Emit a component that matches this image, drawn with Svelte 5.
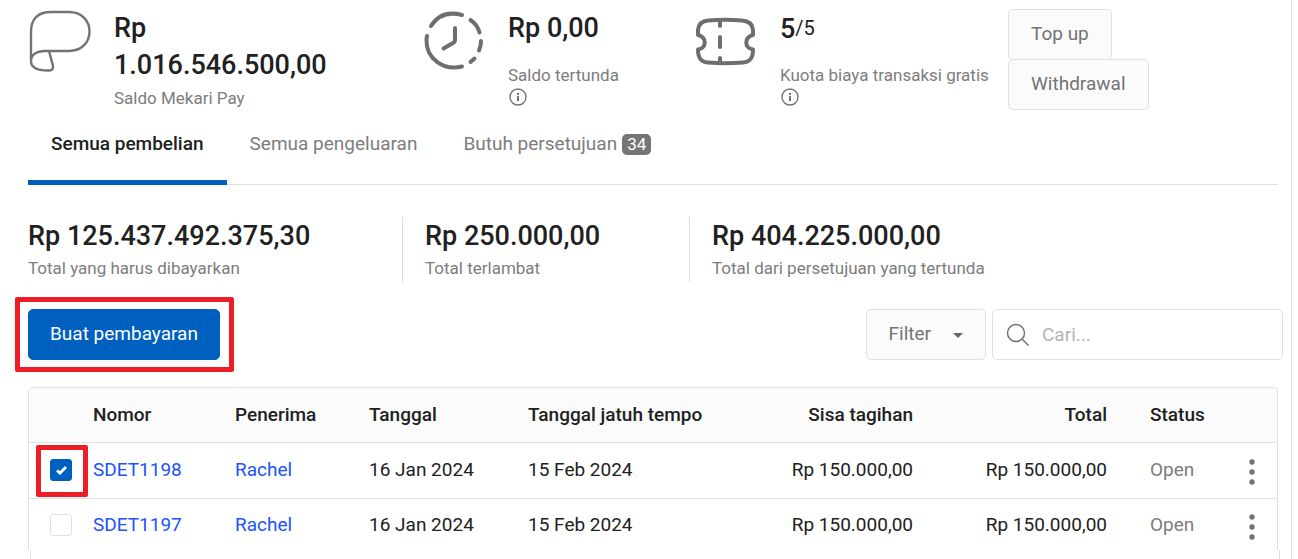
<script>
  const tabs = [
    { label: 'Semua pembelian', active: true },
    { label: 'Semua pengeluaran' },
    { label: 'Butuh persetujuan', badge: 34 }
  ];
  const totals = [
    { value: 'Rp 125.437.492.375,30', label: 'Total yang harus dibayarkan' },
    { value: 'Rp 250.000,00', label: 'Total terlambat' },
    { value: 'Rp 404.225.000,00', label: 'Total dari persetujuan yang tertunda' }
  ];
  let rows = $state([
    { id: 'SDET1198', payee: 'Rachel', date: '16 Jan 2024', due: '15 Feb 2024', left: 'Rp 150.000,00', total: 'Rp 150.000,00', status: 'Open', checked: true },
    { id: 'SDET1197', payee: 'Rachel', date: '16 Jan 2024', due: '15 Feb 2024', left: 'Rp 150.000,00', total: 'Rp 150.000,00', status: 'Open', checked: false }
  ]);
</script>

{#snippet info()}
  <svg class="info" viewBox="0 0 18 18" width="18" height="18" aria-hidden="true">
    <circle cx="9" cy="9" r="8" fill="none" stroke="#6b7280" stroke-width="1.4" />
    <path d="M9 8v5" stroke="#6b7280" stroke-width="2" />
    <path d="M9 5v2" stroke="#6b7280" stroke-width="2" />
  </svg>
{/snippet}

<main class="page">
  <section class="balances">
    <div class="balance">
      <svg class="pic" viewBox="0 0 64 64" width="64" height="64" fill="none" stroke="#737373" stroke-width="2.4" aria-hidden="true">
        <path d="M3 50V22Q3 2 23 2H41C54 2 61.500 11 61.500 21.500S54 41 41 41H17C8 41 3 45 3 51C3 58 9 60.500 20 60.500Q25.500 61 25 56L21 41" stroke-linejoin="round" />
      </svg>
      <div>
        <div class="value">Rp 1.016.546.500,00</div>
        <div class="label">Saldo Mekari Pay</div>
      </div>
    </div>
    <div class="balance">
      <svg class="pic" viewBox="0 0 64 64" width="64" height="64" fill="none" stroke="#6e6e6e" stroke-width="4" stroke-linecap="round" aria-hidden="true">
        <path d="M7 16C14 5 25 1.500 38 5" />
        <path d="M46.500 10C51 13 54 17 55.500 22.500" />
        <path d="M57 31Q57 36 55 40.500" />
        <path d="M50.500 48.500L46.500 52" />
        <path d="M38 56.500C20 61 2 49 2.500 30Q2.500 28 3 26" />
        <path d="M31 18V30Q31 32 29 33L19.500 38.500" />
      </svg>
      <div>
        <div class="value tall">Rp 0,00</div>
        <div class="label">Saldo tertunda</div>
        {@render info()}
      </div>
    </div>
    <div class="balance">
      <svg class="pic" viewBox="0 0 64 64" width="64" height="64" fill="none" stroke="#6e6e6e" stroke-width="4" aria-hidden="true">
        <path d="M2 25V20Q3 11 12 10.500Q29 9 46 10.500Q56 11 57 20V25C48 27 48 38 57 39.500C57 47 55 52 47 52.500Q29 54 12 52.500C4 52 2 47 2 39.500C11 38 11 27 2 25Z" stroke-linejoin="round" />
        <path d="M24 10V16M24 27V37M24 48V53" stroke-linecap="round" />
      </svg>
      <div>
        <div class="value tall">5<small>/5</small></div>
        <div class="label">Kuota biaya transaksi gratis</div>
        {@render info()}
      </div>
    </div>
    <div class="actions">
      <button class="btn">Top up</button>
      <button class="btn">Withdrawal</button>
    </div>
  </section>

  <nav class="tabs">
    {#each tabs as tab}
      <button class="tab" class:active={tab.active}>
        {tab.label}{#if tab.badge}<span class="badge">{tab.badge}</span>{/if}
      </button>
    {/each}
  </nav>

  <section class="totals">
    {#each totals as item}
      <div class="total">
        <div class="value">{item.value}</div>
        <div class="label">{item.label}</div>
      </div>
    {/each}
  </section>

  <section class="toolbar">
    <button class="btn primary marked">Buat pembayaran</button>
    <button class="btn filter">Filter
      <svg viewBox="0 0 10 5" width="10" height="5" aria-hidden="true"><path d="M0 0H10L5 5Z" fill="#666" /></svg>
    </button>
    <label class="search">
      <svg viewBox="0 0 24 24" width="24" height="24" fill="none" stroke="#6e6e6e" stroke-width="1.4" aria-hidden="true">
        <circle cx="10" cy="10" r="8.500" /><path d="M16 16L22.500 22.500" />
      </svg>
      <input type="text" placeholder="Cari..." aria-label="Cari" />
    </label>
  </section>

  <table>
    <colgroup>
      <col class="c-check" /><col class="c-id" /><col class="c-payee" /><col class="c-date" /><col class="c-due" />
      <col class="c-left" /><col class="c-total" /><col class="c-status" /><col class="c-menu" />
    </colgroup>
    <thead>
      <tr>
        <th></th><th>Nomor</th><th>Penerima</th><th>Tanggal</th><th>Tanggal jatuh tempo</th>
        <th class="num">Sisa tagihan</th><th class="num">Total</th><th class="status">Status</th><th></th>
      </tr>
    </thead>
    <tbody>
      {#each rows as row, i}
        <tr>
          <td class="pick">
            <span class="box" class:marked={i === 0}>
              <input type="checkbox" bind:checked={row.checked} aria-label={row.id} />
            </span>
          </td>
          <td><a href="#{row.id}">{row.id}</a></td>
          <td><a href="#{row.payee}">{row.payee}</a></td>
          <td>{row.date}</td>
          <td>{row.due}</td>
          <td class="num">{row.left}</td>
          <td class="num">{row.total}</td>
          <td class="status">{row.status}</td>
          <td class="menu">
            <button class="more" aria-label="Menu {row.id}">
              <svg viewBox="0 0 6 26" width="6" height="26" fill="#737373" aria-hidden="true">
                <circle cx="3" cy="3" r="2.700" /><circle cx="3" cy="13" r="2.700" /><circle cx="3" cy="23" r="2.700" />
              </svg>
            </button>
          </td>
        </tr>
      {/each}
    </tbody>
  </table>
  <div class="rest"></div>
</main>

<style>
  :global(body) { margin: 0; background: #fff; }
  * { box-sizing: border-box; }
  .page {
    display: flex;
    flex-direction: column;
    min-height: 100vh;
    margin-right: 6px;
    padding: 9px 13px 0 28px;
    border-right: 1px solid #e0e0e0;
    font: 19px/24px Roboto, sans-serif;
    color: #212121;
  }
  button, input { font: inherit; }
  .value { padding-top: 1px; font-size: 27px; line-height: 37px; font-weight: 500; }
  .value.tall { min-height: 54px; }
  .value small { font-size: 20px; font-weight: 400; vertical-align: 3px; }
  .label { font-size: 17px; line-height: 24px; color: #7d7d7d; }
  .info { display: block; margin: 1px 0 0 1px; }

  .balances { display: grid; grid-template-columns: 396fr 272fr 312fr 270fr; min-height: 110px; }
  .balance { display: flex; gap: 20px; min-width: 0; }
  .balance:first-child { gap: 22px; }
  .balance:first-child .value { max-width: 240px; margin-bottom: 2px; }
  .pic { flex: none; margin-top: 1px; }
  .actions { display: flex; flex-direction: column; align-items: flex-start; }

  .btn {
    height: 51px;
    padding: 0 22px 2px;
    border: 1px solid #e0e0e0;
    border-radius: 5px;
    background: #fbfbfb;
    color: #737373;
    white-space: nowrap;
  }
  .actions .btn + .btn { margin-top: -1px; }

  .tabs { display: flex; border-bottom: 1px solid #e0e0e0; height: 66px; }
  .tab {
    height: 66px;
    padding: 0 23px 12px;
    border: 0;
    border-bottom: 5px solid transparent;
    background: none;
    color: #7d7d7d;
    white-space: nowrap;
  }
  .tab.active { border-color: #0060c0; color: #212121; font-weight: 500; }
  .badge {
    display: inline-block;
    margin-left: 5px;
    padding: 0 5px;
    border-radius: 5px;
    background: #757575;
    color: #fff;
    font-size: 17px;
    line-height: 21px;
  }

  .totals { display: grid; grid-template-columns: 374fr 287fr 589fr; margin-top: 32px; }
  .total { height: 65px; padding-left: 22px; border-left: 1px solid #dcdce4; }
  .total:first-child { padding-left: 0; border: 0; }
  .total .label { margin-top: 1px; }

  .toolbar { display: flex; align-items: center; gap: 6px; margin: 27px -5px 27px 0; }
  .primary { position: relative; margin-right: auto; padding: 0 21px 2px; background: #0060c0; border-color: #0060c0; color: #fff; }
  .marked::after { content: ''; position: absolute; border: 5px solid #ee1c25; border-radius: 2px; pointer-events: none; }
  .primary.marked::after { inset: -13px -15px -13px -14px; }
  .filter { display: flex; align-items: center; gap: 22px; }
  .filter svg { margin-top: 4px; }
  .search {
    display: flex;
    align-items: center;
    gap: 12px;
    width: 291px;
    height: 51px;
    padding: 0 13px;
    border: 1px solid #e0e0e0;
    border-radius: 5px;
  }
  .search svg { flex: none; }
  .search input { flex: 1; min-width: 0; padding: 0; border: 0; outline: 0; background: none; color: #212121; }
  .search input::placeholder { color: #b3b3b3; }

  table {
    width: 100%;
    table-layout: fixed;
    border-collapse: separate;
    border-spacing: 0;
    border: 1px solid #e0e0e0;
    border-bottom: 0;
    border-radius: 5px 5px 0 0;
    overflow: hidden;
    white-space: nowrap;
  }
  .c-check { width: 64px; }
  .c-id { width: 142px; }
  .c-payee { width: 134px; }
  .c-date { width: 159px; }
  .c-due { width: 202px; }
  .c-left { width: 183px; }
  .c-total { width: 194px; }
  .c-status { width: 119px; }
  .c-menu { width: 51px; }
  th { height: 55px; padding: 0; text-align: left; font-weight: 500; background: #fbfbfb; border-bottom: 1px solid #e0e0e0; }
  td { height: 56px; padding: 0 0 2px; border-bottom: 1px solid #e0e0e0; }
  tbody tr:last-child td { height: 51px; padding-bottom: 0; border-bottom: 0; }
  .num { text-align: right; }
  .status { padding-left: 43px; }
  td.status { color: #7d7d7d; }
  a { color: #2152ff; text-decoration: none; }
  .pick { padding-left: 21px; }
  .box { position: relative; display: block; width: 22px; height: 22px; }
  .box.marked::after { inset: -14px -16px -16px -14px; }
  .box input {
    appearance: none;
    display: block;
    width: 22px;
    height: 22px;
    margin: 0;
    border: 1px solid #e0e0e0;
    border-radius: 3px;
    background: #fff;
  }
  .box input:checked {
    border-color: #0060c0;
    background: #0060c0 url("data:image/svg+xml,%3Csvg xmlns='http://www.w3.org/2000/svg' viewBox='0 0 20 20'%3E%3Cpath d='M6 10.500L9 13L15 7' fill='none' stroke='white' stroke-width='2.800'/%3E%3C/svg%3E") center / 20px 20px no-repeat;
  }
  .more { display: block; margin: 0 auto; padding: 4px 0 0; border: 0; background: none; }
  .more svg { display: block; }
  .rest { flex: 1; margin: 0 -2px 0 2px; border: solid #e0e0e0; border-width: 0 1px; }
</style>
